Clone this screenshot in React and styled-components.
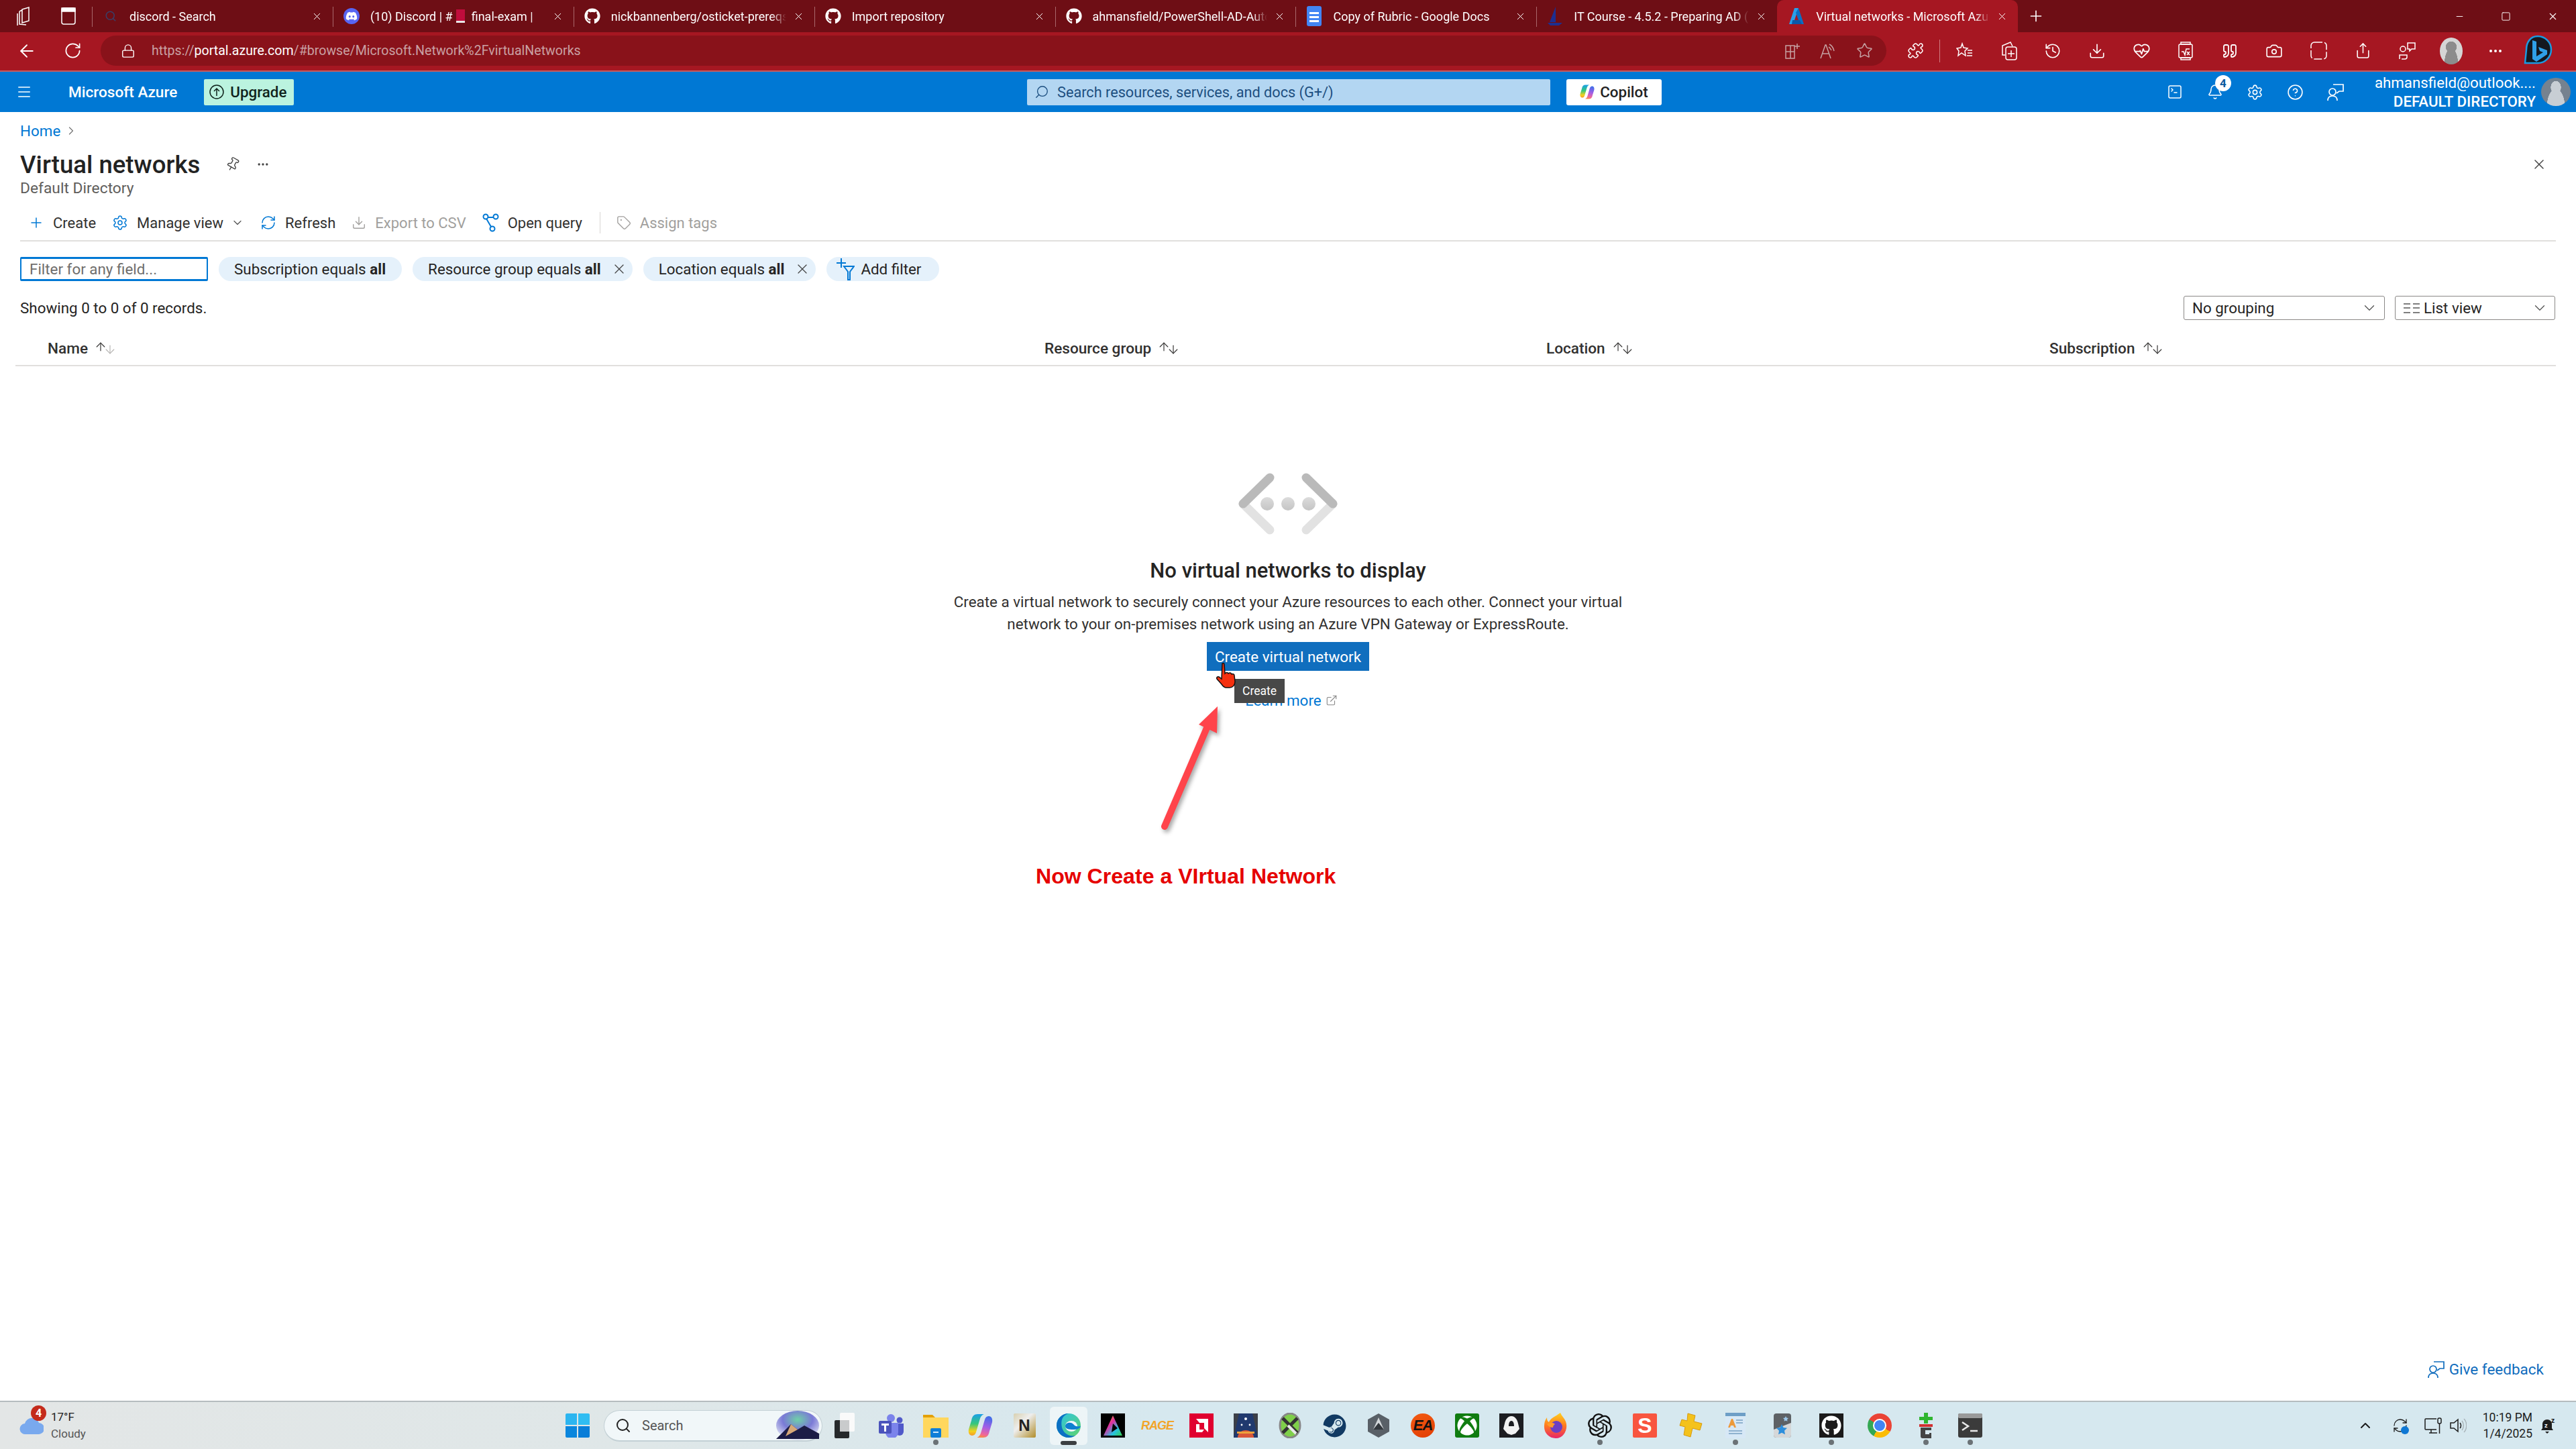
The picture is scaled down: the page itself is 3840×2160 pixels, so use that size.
import React from "react";
import styled, { createGlobalStyle } from "styled-components";
import {
  ArrowDown, ArrowLeft, ArrowUp, Camera, ChevronDown, ChevronRight, ChevronUp, CircleHelp, Download,
  Ellipsis, ExternalLink, HeartPulse, Lock, Menu, Minus, Pin, Plus, Puzzle, Quote,
  RefreshCw, RotateCw, Search, Settings, Share, Square, Star, Tag, TerminalSquare, X, History, Bell,
} from "lucide-react";
import { FaGithub, FaSteam, FaXbox, FaDiscord } from "react-icons/fa";
import { SiOpenai } from "react-icons/si";

const FONT = '"Roboto", "Liberation Sans", sans-serif';

const GlobalStyle = createGlobalStyle`
  html, body { margin: 0; padding: 0; background: #fff; }
  body { font-family: ${FONT}; overflow: hidden; }
  * { box-sizing: border-box; }
`;

const Page = styled.div`
  position: relative;
  width: 3840px;
  height: 2160px;
  display: flex;
  flex-direction: column;
  overflow: hidden;
`;

/* ---------- browser tabs ---------- */
const TabStrip = styled.div`
  flex: 0 0 48px;
  display: flex;
  align-items: stretch;
  background: #6e0e15;
  color: #fff;
`;

const StripTools = styled.div`
  flex: 0 0 137px;
  display: flex;
  align-items: center;
  gap: 40px;
  padding-left: 25px;
`;

const Tab = styled.div`
  flex: 0 0 358.9px;
  width: 358.9px;
  min-width: 0;
  display: flex;
  align-items: center;
  padding: 0 15px 0 16px;
  position: relative;
  background: ${(p) => (p.$active ? "#a61722" : "transparent")};
  border-radius: ${(p) => (p.$active ? "10px 10px 0 0" : "0")};
  &::before {
    content: "";
    display: ${(p) => (p.$active ? "none" : "block")};
    position: absolute;
    left: 0;
    top: 10px;
    bottom: 8px;
    width: 1px;
    background: #a9686c;
  }
`;

const TabIcon = styled.span`
  flex: 0 0 24px;
  display: flex;
  align-items: center;
  justify-content: center;
  margin-right: 16px;
`;

const TabTitle = styled.span`
  flex: 1;
  min-width: 0;
  margin-right: 10px;
  font-size: 18px;
  white-space: nowrap;
  overflow: hidden;
  -webkit-mask-image: linear-gradient(to right, #000 calc(100% - 22px), transparent);
  mask-image: linear-gradient(to right, #000 calc(100% - 22px), transparent);
`;

const EmojiBlock = styled.span`
  display: inline-block;
  width: 13px;
  height: 20px;
  margin: 0 10px 0 5px;
  vertical-align: -3px;
  background: linear-gradient(#c00d3c 85%, #e8e8e8 85%);
`;

const NewTab = styled.span`
  display: flex;
  align-items: center;
  margin-left: 14px;
`;

const WindowControls = styled.div`
  margin-left: auto;
  display: flex;
  align-items: center;
  gap: 54px;
  padding-right: 26px;
`;

/* ---------- address bar ---------- */
const AddressRow = styled.div`
  flex: 0 0 59px;
  display: flex;
  align-items: center;
  padding: 0 0 2px 6px;
  background: #a61722;
  border-bottom: 2px solid #c45c60;
  color: #fff;
`;

const ToolButton = styled.span`
  flex: 0 0 ${(p) => p.$w || 66}px;
  display: flex;
  align-items: center;
  justify-content: center;
`;

const AddressField = styled.div`
  flex: 0 0 2662px;
  height: 45px;
  margin: 0 10px 0 8px;
  padding: 0 20px 0 30px;
  display: flex;
  align-items: center;
  background: #89121a;
  border-radius: 23px;
`;

const Url = styled.span`
  margin-left: 24px;
  font-size: 19.6px;
  color: #c9a0a3;
  b { font-weight: 400; color: #fff; }
`;

const FieldIcons = styled.span`
  margin-left: auto;
  display: flex;
  align-items: center;
  gap: 30px;
  color: #c6a2a4;
`;

const ToolSep = styled.span`
  flex: 0 0 1px;
  height: 34px;
  margin: 0 3px;
  background: #cf7c80;
`;

const ProfileDot = styled.span`
  width: 34px;
  height: 40px;
  border-radius: 50%;
  background: radial-gradient(circle at 50% 35%, #8c8c8c 0 26%, transparent 27%),
    radial-gradient(ellipse at 50% 100%, #8c8c8c 0 42%, transparent 43%), #d5d5d5;
`;

const BingSlot = styled.span`
  display: flex;
  margin-left: 8px;
`;

/* ---------- azure header ---------- */
const AzureBar = styled.header`
  flex: 0 0 60px;
  display: flex;
  align-items: center;
  background: #0078d4;
  color: #fff;
`;

const AzureLeft = styled.div`
  flex: 0 0 1531px;
  display: flex;
  align-items: center;
  padding-left: 24px;
`;

const Brand = styled.span`
  margin-left: 54px;
  font-size: 22.6px;
  font-weight: 500;
`;

const UpgradeButton = styled.span`
  margin-left: 40px;
  width: 134px;
  height: 39px;
  display: flex;
  align-items: center;
  gap: 9px;
  padding-left: 8px;
  background: #bbf3df;
  border-radius: 2px;
  color: #10231c;
  font-size: 22.4px;
  font-weight: 500;
`;

const GlobalSearch = styled.div`
  flex: 0 0 780px;
  height: 39px;
  display: flex;
  align-items: center;
  gap: 12px;
  padding-left: 11px;
  background: #b3d6f2;
  border-radius: 2px;
  color: #1d4f80;
  font-size: 21.7px;
`;

const MirrorIcon = styled.span`
  display: flex;
  transform: scaleX(-1);
`;

const CopilotButton = styled.span`
  flex: 0 0 142px;
  height: 39px;
  margin-left: 24px;
  display: flex;
  align-items: center;
  justify-content: center;
  gap: 8px;
  background: #fff;
  border-radius: 3px;
  color: #222;
  font-size: 22.4px;
  font-weight: 500;
`;

const HeaderIcons = styled.div`
  margin-left: auto;
  display: flex;
  align-items: center;
`;

const HeaderIcon = styled.span`
  position: relative;
  flex: 0 0 60px;
  display: flex;
  justify-content: center;
`;

const NotifyBadge = styled.span`
  position: absolute;
  top: -13px;
  left: 30px;
  width: 24px;
  height: 24px;
  display: flex;
  align-items: center;
  justify-content: center;
  border-radius: 50%;
  background: #fff;
  color: #0b5a9e;
  font-size: 17px;
  font-weight: 700;
`;

const Account = styled.div`
  display: flex;
  align-items: center;
  gap: 8px;
  margin-left: 28px;
  padding-right: 8px;
`;

const AccountText = styled.div`
  text-align: right;
  font-size: 22.3px;
  line-height: 28px;
  strong { display: block; font-weight: 500; }
`;

const AccountAvatar = styled.span`
  width: 44px;
  height: 42px;
  border-radius: 50%;
  background: radial-gradient(ellipse at 50% 34%, #c8ced4 0 24%, transparent 25%),
    radial-gradient(ellipse at 50% 100%, #c8ced4 0 42%, transparent 43%), #76828f;
`;

/* ---------- portal blade ---------- */
const Blade = styled.main`
  flex: 1;
  min-height: 0;
  display: flex;
  flex-direction: column;
  padding: 0 30px;
  background: #fff;
  color: #252423;
`;

const Breadcrumb = styled.nav`
  margin-top: 16px;
  height: 24px;
  display: flex;
  align-items: center;
  gap: 6px;
  font-size: 22.4px;
  color: #0078d4;
  svg { color: #777; }
`;

const TitleRow = styled.div`
  margin-top: 20px;
  height: 36px;
  display: flex;
  align-items: center;
  padding-right: 13px;
`;

const Title = styled.h1`
  margin: 0;
  font-size: 36.6px;
  font-weight: 500;
  color: #222;
`;

const TitleAction = styled.span`
  display: flex;
  margin-left: ${(p) => p.$ml};
  color: #444;
  svg { transform: ${(p) => (p.$tilt ? "rotate(30deg)" : "none")}; }
`;

const Subtitle = styled.div`
  margin-top: 5px;
  height: 26px;
  line-height: 26px;
  font-size: 22.8px;
  color: #5f5e5c;
`;

const CommandBar = styled.div`
  margin-top: 21px;
  height: 45px;
  padding: 0 0 9px 12px;
  display: flex;
  align-items: center;
  gap: 24px;
  border-bottom: 2px solid #e1dfdd;
`;

const Command = styled.span`
  display: flex;
  align-items: center;
  gap: 13px;
  font-size: 22px;
  color: ${(p) => (p.$disabled ? "#a19f9d" : "#323130")};
  svg { flex: none; color: ${(p) => (p.$disabled ? "#a19f9d" : "#0078d4")}; }
  svg.caret { color: #555; margin-left: -2px; }
`;

const CommandSep = styled.span`
  width: 1px;
  height: 32px;
  margin-left: 2px;
  background: #d8d6d4;
`;

const FilterRow = styled.div`
  margin-top: 23px;
  display: flex;
  align-items: center;
  gap: 16px;
`;

const FilterInput = styled.input`
  width: 280px;
  height: 36px;
  padding: 0 12px;
  border: solid #0078d4;
  border-width: 3px 2px;
  border-radius: 2px;
  outline: none;
  font-family: ${FONT};
  font-size: 22.4px;
  &::placeholder { color: #6f6e6c; opacity: 1; }
`;

const Pill = styled.span`
  height: 36px;
  display: flex;
  align-items: center;
  padding: 0 ${(p) => (p.$closable ? 8 : 24)}px 0 23px;
  gap: 15px;
  border-radius: 18px;
  background: #e5f1fb;
  font-size: 22.4px;
  color: #252423;
  b { font-weight: 700; }
  svg { color: #444; }
`;

const AddFilter = styled(Pill)`
  padding: 0 27px 0 15px;
  gap: 9px;
`;

const SummaryRow = styled.div`
  margin-top: 22px;
  display: flex;
  align-items: center;
  justify-content: space-between;
  padding-right: 1px;
  font-size: 22.4px;
`;

const Dropdowns = styled.div`
  display: flex;
  gap: 15px;
`;

const Dropdown = styled.div`
  width: ${(p) => p.$w}px;
  height: 36px;
  display: flex;
  align-items: center;
  gap: 6px;
  padding: 0 9px 0 12px;
  border: 1px solid #8a8886;
  border-radius: 3px;
  font-size: 22.4px;
  svg:last-child { margin-left: auto; color: #555; }
`;

const TableHead = styled.div`
  margin: 21px 0 0 -7px;
  height: 48px;
  padding: 0 0 4px 48px;
  display: grid;
  grid-template-columns: 1486px 748px 750px 1fr;
  align-items: center;
  border-bottom: 2px solid #e1dfdd;
`;

const HeadCell = styled.span`
  display: flex;
  align-items: center;
  gap: 9px;
  font-size: 22.6px;
  font-weight: 500;
  color: #323130;
`;

const SortArrows = styled.span`
  display: inline-flex;
  svg + svg { margin-left: -6px; margin-top: 4px; color: ${(p) => (p.$faded ? "#b5b3b1" : "#323130")}; }
`;

const EmptyState = styled.section`
  margin-top: 158px;
  display: flex;
  flex-direction: column;
  align-items: center;
  text-align: center;
`;

const EmptyTitle = styled.h2`
  margin: 33px 0 0;
  line-height: 40px;
  font-size: 31px;
  font-weight: 500;
  color: #252423;
`;

const EmptyText = styled.p`
  margin: 10px 0 0;
  width: 1040px;
  line-height: 33px;
  font-size: 22.4px;
  color: #323130;
`;

const PrimaryButton = styled.button`
  margin-top: 10px;
  width: 242px;
  height: 43px;
  border: 0;
  background: #106ebe;
  color: #fff;
  font-family: ${FONT};
  font-size: 22.4px;
`;

const LearnMore = styled.a`
  margin: 29px 0 0 10px;
  display: flex;
  align-items: center;
  gap: 6px;
  line-height: 30px;
  font-size: 22.4px;
  color: #0078d4;
  svg { color: #888; }
`;

const Feedback = styled.a`
  margin: auto 18px 32px 0;
  align-self: flex-end;
  display: flex;
  align-items: center;
  gap: 7px;
  line-height: 30px;
  font-size: 22.5px;
  color: #0f6cbd;
`;

/* ---------- things drawn over the page ---------- */
const Tooltip = styled.div`
  position: absolute;
  left: 1840px;
  top: 1012px;
  width: 75px;
  height: 36px;
  display: flex;
  align-items: center;
  justify-content: center;
  background: #484848;
  color: #fff;
  font-size: 17.5px;
`;

const HandCursor = styled.svg`
  position: absolute;
  left: 1812px;
  top: 987px;
  width: 34px;
  height: 40px;
`;

const ArrowMark = styled.svg`
  position: absolute;
  left: 1725px;
  top: 1048px;
  width: 100px;
  height: 195px;
  overflow: visible;
  filter: drop-shadow(3px 4px 3px rgba(0, 0, 0, 0.35));
`;

const Callout = styled.div`
  position: absolute;
  left: 1544px;
  top: 1285px;
  line-height: 42px;
  font-family: "Liberation Sans", Arial, sans-serif;
  font-size: 32.1px;
  font-weight: 700;
  color: #e60000;
`;

/* ---------- taskbar ---------- */
const Taskbar = styled.footer`
  flex: 0 0 72px;
  display: flex;
  align-items: center;
  border-top: 2px solid #b5bcbf;
  background: linear-gradient(90deg, #e3e6e6 0%, #dfe7e8 25%, #d6e8ef 45%, #d6e8ef 100%);
  color: #1c1c1c;
`;

const Weather = styled.div`
  flex: 0 0 843px;
  position: relative;
  display: flex;
  align-items: center;
  gap: 11px;
  padding-left: 29px;
  font-size: 17px;
  line-height: 25px;
  small { display: block; font-size: 17px; color: #555; }
`;

const CloudBadge = styled.span`
  position: absolute;
  left: 46px;
  top: -5px;
  width: 23px;
  height: 23px;
  display: flex;
  align-items: center;
  justify-content: center;
  border-radius: 50%;
  background: #c42b1c;
  color: #fff;
  font-size: 16px;
  font-weight: 700;
`;

const TaskSearch = styled.div`
  flex: 0 0 326px;
  height: 47px;
  margin-left: 21px;
  display: flex;
  align-items: center;
  gap: 16px;
  padding: 0 0 0 16px;
  border-radius: 24px;
  background: #f1f7f9;
  border: 1px solid #c3d0d5;
  border-bottom-width: 2px;
  font-size: 20px;
  color: #555;
  svg:last-child { margin: 0 2px 0 auto; }
`;

const TaskItem = styled.span`
  position: relative;
  flex: 0 0 66px;
  height: 57px;
  margin-left: ${(p) => p.$ml || 0}px;
  display: flex;
  align-items: center;
  justify-content: center;
  &::before {
    content: "";
    display: ${(p) => (p.$active ? "block" : "none")};
    position: absolute;
    inset: 0 5px;
    border-radius: 6px;
    background: rgba(255, 255, 255, 0.55);
  }
  &::after {
    content: "";
    display: ${(p) => (p.$run || p.$active ? "block" : "none")};
    position: absolute;
    bottom: 0;
    left: 50%;
    width: ${(p) => (p.$active ? 24 : 8)}px;
    height: ${(p) => (p.$active ? 6 : 8)}px;
    margin-left: ${(p) => (p.$active ? -12 : -4)}px;
    border-radius: 4px;
    background: ${(p) => (p.$active ? "#3b3f42" : "#6b7276")};
  }
  > * { position: relative; }
`;

const Tile = styled.span`
  width: ${(p) => p.$size || 36}px;
  height: ${(p) => p.$h || 36}px;
  display: flex;
  align-items: center;
  justify-content: center;
  background: ${(p) => p.$bg};
  color: ${(p) => p.$fg || "#fff"};
  border-radius: ${(p) => p.$r || 0}px;
  font-size: ${(p) => p.$fs || 20}px;
  font-weight: 700;
  font-style: ${(p) => (p.$italic ? "italic" : "normal")};
  font-family: "Liberation Sans", sans-serif;
  letter-spacing: ${(p) => p.$ls || 0}px;
`;

const ChromeBall = styled.span`
  width: 36px;
  height: 36px;
  display: flex;
  align-items: center;
  justify-content: center;
  border-radius: 50%;
  background: conic-gradient(#ea4335 0 120deg, #fbbc04 120deg 210deg, #34a853 210deg 300deg, #ea4335 300deg);
  &::after {
    content: "";
    width: 16px;
    height: 16px;
    border-radius: 50%;
    background: #4285f4;
    border: 2px solid #fff;
  }
`;

const Tray = styled.div`
  margin-left: auto;
  display: flex;
  align-items: center;
  padding-right: 30px;
  color: #1c1c1c;
`;

const TrayIcon = styled.span`
  position: relative;
  display: flex;
  margin-left: ${(p) => p.$ml}px;
`;

const SyncDot = styled.span`
  position: absolute;
  right: -1px;
  bottom: -1px;
  width: 12px;
  height: 12px;
  border-radius: 50%;
  background: #0f78d4;
`;

const Clock = styled.div`
  margin-left: 24px;
  text-align: right;
  font-size: 17.5px;
  line-height: 24px;
`;

const GithubMark = () => <FaGithub size={24} />;

const AzureMark = ({ size = 26 }) => (
  <svg width={size} height={size} viewBox="0 0 24 26">
    <path d="M9 1h6L7 25H1z" fill="#2aa0ea" />
    <path d="M15 1l8 24h-6L11 8z" fill="#0a6fc4" />
    <path d="M6 19h11l3 6H5z" fill="#0c58a8" />
  </svg>
);

const CopilotMark = ({ id, size = 24 }) => (
  <svg width={size} height={size} viewBox="0 0 36 36">
    <defs>
      <linearGradient id={`${id}A`} x1="0.3" y1="0" x2="0.3" y2="1">
        <stop offset="0" stopColor="#1a9fe8" />
        <stop offset="0.45" stopColor="#35c77a" />
        <stop offset="0.8" stopColor="#f4d21c" />
        <stop offset="1" stopColor="#f49a2a" />
      </linearGradient>
      <linearGradient id={`${id}B`} x1="0.6" y1="0" x2="0.4" y2="1">
        <stop offset="0" stopColor="#3f6ee8" />
        <stop offset="0.5" stopColor="#a45ee6" />
        <stop offset="0.85" stopColor="#f0679a" />
        <stop offset="1" stopColor="#f78a4a" />
      </linearGradient>
    </defs>
    <path d="M14 1h9c-3 1-5 4-6 8l-5 17c-1 4-3 6-6 6-4 0-6-4-5-9l4-13c1-6 4-9 9-9z" fill={`url(#${id}A)`} />
    <path d="M22 35h-9c3-1 5-4 6-8l5-17c1-4 3-6 6-6 4 0 6 4 5 9l-4 13c-1 6-4 9-9 9z" fill={`url(#${id}B)`} />
  </svg>
);

const BingMark = () => (
  <svg width="44" height="48" viewBox="0 0 44 48">
    <path d="M22 2c11 0 20 9 20 20s-9 20-20 20H3l2-20C5 11 11 2 22 2z" fill="#14181f" stroke="#1b9ae0" strokeWidth="2.5" />
    <path d="M14 8l6 2v22l10-6-5-2-2-6 13 5v6L20 40l-6-4z" fill="#2f9fe6" />
  </svg>
);

const tabs = [
  { id: "search", title: "discord - Search", icon: <Search size={18} color="#3a3f68" /> },
  {
    id: "discord",
    title: (
      <>
        (10) Discord | #<EmojiBlock />final-exam |
      </>
    ),
    icon: (
      <Tile $size={24} $h={24} $bg="#5865f2" $r={12}>
        <FaDiscord size={18} />
      </Tile>
    ),
  },
  { id: "osticket", title: "nickbannenberg/osticket-prereqs", icon: <GithubMark /> },
  { id: "import", title: "Import repository", icon: <GithubMark /> },
  { id: "psad", title: "ahmansfield/PowerShell-AD-Automation", icon: <GithubMark /> },
  {
    id: "docs",
    title: "Copy of Rubric - Google Docs",
    icon: (
      <svg width="22" height="30" viewBox="0 0 22 30">
        <rect width="22" height="30" rx="3" fill="#4285f4" />
        <path d="M4 9h14v3H4zM4 15h14v3H4zM4 21h14v3H4z" fill="#fff" />
      </svg>
    ),
  },
  {
    id: "course",
    title: "IT Course - 4.5.2 - Preparing AD (",
    icon: (
      <svg width="24" height="30" viewBox="0 0 24 30">
        <path d="M13 1v23H4z" fill="#1d2f91" />
        <path d="M1 25h22l-5 4H5z" fill="#1d2f91" />
      </svg>
    ),
  },
  { id: "vnet", title: "Virtual networks - Microsoft Azure", icon: <AzureMark />, active: true },
];

const StartIcon = () => (
  <svg width="36" height="36" viewBox="0 0 36 36">
    <path d="M0 2a2 2 0 012-2h15v17H0z" fill="#2cb5f0" />
    <path d="M19 0h15a2 2 0 012 2v15H19z" fill="#30bdf2" />
    <path d="M0 19h17v17H2a2 2 0 01-2-2z" fill="#0a86dd" />
    <path d="M19 19h17v15a2 2 0 01-2 2H19z" fill="#0a7ed8" />
  </svg>
);

const taskApps = [
  {
    id: "taskview",
    node: (
      <svg width="30" height="38" viewBox="0 0 30 38">
        <rect x="0" y="11" width="22" height="27" rx="2" fill="#26292b" />
        <rect x="8" y="0" width="22" height="28" rx="2" fill="#fafafa" />
        <rect x="8" y="11" width="14" height="17" fill="#c9cbcc" />
      </svg>
    ),
  },
  {
    id: "teams",
    ml: 4,
    node: (
      <svg width="38" height="36" viewBox="0 0 38 36">
        <circle cx="18" cy="7" r="6" fill="#7b83eb" />
        <circle cx="31" cy="10" r="4.5" fill="#5059c9" />
        <path d="M25 15h12v12a6 6 0 01-12 0z" fill="#5059c9" />
        <path d="M10 14h19v14a9 9 0 01-19 0z" fill="#7b83eb" />
        <rect x="0" y="11" width="19" height="19" rx="2" fill="#4b53bc" />
        <path d="M4 15h11v3h-4v9H8v-9H4z" fill="#fff" />
      </svg>
    ),
  },
  {
    id: "files",
    run: true,
    node: (
      <svg width="38" height="36" viewBox="0 0 38 36">
        <path d="M0 2h14l4 4h20v6H0z" fill="#e3a008" />
        <path d="M0 6h38v30H0z" fill="#ffd75e" />
        <rect x="11" y="22" width="16" height="14" rx="2" fill="#0f7ed8" />
        <rect x="15" y="27" width="8" height="2" fill="#cfe8fb" />
      </svg>
    ),
  },
  { id: "copilot", node: <CopilotMark id="cpTask" size={37} /> },
  {
    id: "notepad",
    node: (
      <Tile $bg="linear-gradient(135deg,#d8d0b0,#eee 40%,#b08d2a)" $r={2} $fg="#222" $fs={24} $size={33}>
        N
      </Tile>
    ),
  },
  {
    id: "edge",
    active: true,
    node: (
      <svg width="36" height="38" viewBox="0 0 36 38">
        <defs>
          <linearGradient id="edA" x1="0" y1="0" x2="1" y2="1">
            <stop offset="0" stopColor="#2bc4e8" />
            <stop offset="1" stopColor="#5fd36a" />
          </linearGradient>
        </defs>
        <circle cx="18" cy="19" r="18" fill="url(#edA)" />
        <path d="M0 19C0 8 9 1 18 1 8 4 6 12 8 22c2 8 10 14 20 12-3 2-6 3-10 3C8 37 0 29 0 19z" fill="#0c70c4" />
        <ellipse cx="22" cy="20" rx="9" ry="8" fill="#f1f7fa" />
        <path d="M13 20c0-5 8-7 12-3 2 2 3 4 11 3-1 4-6 5-11 5-7 0-12-1-12-5z" fill="#0f80d0" />
      </svg>
    ),
  },
  {
    id: "prism",
    node: (
      <Tile $bg="#000">
        <svg width="30" height="34" viewBox="0 0 30 34">
          <defs>
            <linearGradient id="prA" x1="0" y1="0" x2="1" y2="1">
              <stop offset="0" stopColor="#f6d20c" />
              <stop offset="0.4" stopColor="#e02ea0" />
              <stop offset="0.7" stopColor="#26c2e0" />
              <stop offset="1" stopColor="#36d04a" />
            </linearGradient>
          </defs>
          <path d="M15 2L29 32H1z" fill="url(#prA)" />
          <path d="M15 14l7 7-9 6z" fill="#000" />
        </svg>
      </Tile>
    ),
  },
  {
    id: "rage",
    node: (
      <Tile $bg="transparent" $fg="#f2a52a" $size={40} $fs={18} $italic $ls={-1}>
        RAGE
      </Tile>
    ),
  },
  {
    id: "amd",
    node: (
      <Tile $bg="#e0002f">
        <svg width="24" height="24" viewBox="0 0 24 24">
          <path d="M4 2h18v20l-6-6V8H9zM4 10l5 0v8h7l-3 4H4z" fill="#fff" />
        </svg>
      </Tile>
    ),
  },
  {
    id: "starfield",
    node: (
      <svg width="36" height="36" viewBox="0 0 36 36">
        <rect width="36" height="36" fill="#20396e" />
        <path d="M0 0h8L0 36zM36 0h-8l8 36z" fill="#3b3f48" />
        <circle cx="18" cy="8" r="2" fill="#fff" />
        <circle cx="12" cy="17" r="1.4" fill="#fff" />
        <circle cx="24" cy="17" r="1.4" fill="#fff" />
        <path d="M6 36a12 11 0 0124 0z" fill="#d9563a" />
        <path d="M5 27h26v3H5z" fill="#eda23c" />
      </svg>
    ),
  },
  {
    id: "xmark",
    node: (
      <svg width="34" height="38" viewBox="0 0 34 38">
        <ellipse cx="17" cy="19" rx="15" ry="18" fill="#7fcf4a" stroke="#888" strokeWidth="3" />
        <path d="M6 8l22 22M6 30L28 8" stroke="#333" strokeWidth="5" />
        <path d="M14 19l12 12" stroke="#e8e8e8" strokeWidth="4" />
      </svg>
    ),
  },
  { id: "steam", node: <FaSteam size={35} color="#123a63" /> },
  {
    id: "hex",
    node: (
      <svg width="32" height="36" viewBox="0 0 32 36">
        <path d="M16 0l16 9v18l-16 9L0 27V9z" fill="#596067" />
        <path d="M16 6l8 18H8z" fill="#d2d6d9" />
        <path d="M16 14l8 10H8z" fill="#33383d" />
      </svg>
    ),
  },
  {
    id: "ea",
    node: (
      <Tile $bg="linear-gradient(160deg,#f25b12,#e23d04)" $r={18} $fg="#111" $fs={22} $italic $ls={-1}>
        EA
      </Tile>
    ),
  },
  {
    id: "xbox",
    node: (
      <Tile $bg="#107c10" $r={3}>
        <FaXbox size={30} />
      </Tile>
    ),
  },
  {
    id: "riot",
    node: (
      <Tile $bg="#1c1d21">
        <svg width="24" height="30" viewBox="0 0 24 30">
          <path d="M12 1c6 0 9 6 10 11l2 8-6 7-6 2-6-2-6-7 2-8C3 7 6 1 12 1zm0 7c-3 0-4 4-4 8h8c0-4-1-8-4-8z" fill="#f2f2f2" />
        </svg>
      </Tile>
    ),
  },
  {
    id: "firefox",
    node: (
      <svg width="36" height="38" viewBox="0 0 36 38">
        <defs>
          <linearGradient id="ffA" x1="0.5" y1="0" x2="0.5" y2="1">
            <stop offset="0" stopColor="#ffd21f" />
            <stop offset="0.5" stopColor="#ff7a1f" />
            <stop offset="1" stopColor="#e8246a" />
          </linearGradient>
        </defs>
        <path d="M25 0c2 5 6 8 8 13 4 10-2 25-15 25C8 38 0 30 1 19c0-4 1-8 4-12 0 4 1 6 3 7 2-6 9-8 17-14z" fill="url(#ffA)" />
        <circle cx="19" cy="21" r="9" fill="#6b3fc4" />
        <path d="M5 17c4-3 9-3 12 0-2 1-3 3-3 5-4 0-7-2-9-5z" fill="#ff9a2a" />
      </svg>
    ),
  },
  { id: "chatgpt", run: true, node: <SiOpenai size={36} color="#111" /> },
  {
    id: "snagit",
    ml: 1,
    node: (
      <Tile $bg="#f8553f" $r={2} $fs={32}>
        S
      </Tile>
    ),
  },
  {
    id: "psplus",
    ml: 3,
    node: (
      <svg width="36" height="38" viewBox="0 0 36 38">
        <path d="M13 1l11 3-2 9 12 3-3 10-11-3-3 13-10-3 2-12L1 19l3-9 8 2z" fill="#f4c21c" stroke="#d69a10" strokeWidth="1" />
      </svg>
    ),
  },
  {
    id: "wordpad",
    run: true,
    node: (
      <svg width="30" height="38" viewBox="0 0 30 38">
        <rect x="0" y="2" width="30" height="36" rx="2" fill="#d7e8f6" />
        <rect x="0" y="0" width="30" height="5" fill="#6d9ec6" />
        <path d="M4 22l5-13h2l5 13h-3l-1-3H8l-1 3z" fill="#ec9a3c" />
        <path d="M16 11h10M16 15h10M5 27h20M5 31h20" stroke="#8fb2cf" strokeWidth="2" />
      </svg>
    ),
  },
  {
    id: "anki",
    ml: 4,
    node: (
      <svg width="26" height="36" viewBox="0 0 26 36">
        <rect width="26" height="36" rx="4" fill="#5d6165" />
        <path d="M0 24L26 14v18a4 4 0 01-4 4H4a4 4 0 01-4-4z" fill="#d5d7d8" />
        <path d="M12 16l2.5 5 5.5.8-4 4 1 5.5-5-2.6-5 2.6 1-5.5-4-4 5.5-.8z" fill="#2e8fdc" />
        <path d="M18 4l1.2 2.5 2.8.4-2 2 .5 2.8-2.5-1.3-2.5 1.3.5-2.8-2-2 2.8-.4z" fill="#9cc7ea" />
      </svg>
    ),
  },
  {
    id: "github",
    ml: 7,
    run: true,
    node: (
      <Tile $bg="#1b1a1a">
        <FaGithub size={30} />
      </Tile>
    ),
  },
  { id: "chrome", ml: 6, node: <ChromeBall /> },
  {
    id: "gitplus",
    ml: 3,
    run: true,
    node: (
      <svg width="22" height="38" viewBox="0 0 22 38">
        <path d="M8 0h6v6h7v5h-7v5H8v-5H1V6h7z" fill="#2fb52f" />
        <rect x="1" y="17" width="20" height="4" fill="#d12f2f" />
        <path d="M3 22h16v4h-9v6h6v-2h3v8H6c-2 0-3-1-3-3z" fill="#444" />
      </svg>
    ),
  },
  {
    id: "terminal",
    run: true,
    node: (
      <svg width="36" height="36" viewBox="0 0 36 36">
        <rect width="36" height="36" rx="3" fill="#3b3b3b" />
        <rect width="36" height="7" rx="2" fill="#9a9a9a" />
        <path d="M6 13l9 6-9 6" fill="none" stroke="#e8e8e8" strokeWidth="2.5" />
        <path d="M18 26h11" stroke="#e8e8e8" strokeWidth="2.5" />
      </svg>
    ),
  },
];

const VnetEmptyIcon = () => (
  <svg width="150" height="94" viewBox="0 0 150 94">
    <defs>
      <linearGradient id="dotFill" x1="0" y1="0" x2="0" y2="1">
        <stop offset="0" stopColor="#dcdcdc" />
        <stop offset="1" stopColor="#c4c4c4" />
      </linearGradient>
    </defs>
    <g fill="none" strokeLinecap="round" strokeWidth="13">
      <path d="M8 47l40 39M142 47l-40 39" stroke="#e2e2e2" />
      <path d="M8 47L48 8M142 47L102 8" stroke="#bababa" />
    </g>
    <circle cx="44" cy="47" r="10" fill="url(#dotFill)" />
    <circle cx="75" cy="47" r="10" fill="url(#dotFill)" />
    <circle cx="106" cy="47" r="10" fill="url(#dotFill)" />
  </svg>
);

const AddFilterIcon = () => (
  <svg width="27" height="34" viewBox="0 0 27 34" fill="none" stroke="#0078d4" strokeWidth="2">
    <path d="M7 1v14M0 8h14" />
    <path d="M11 13h15l-6 8v12h-3V21z" />
  </svg>
);

const QueryIcon = () => (
  <svg width="25" height="28" viewBox="0 0 25 28" fill="none" stroke="#0078d4" strokeWidth="2">
    <circle cx="5" cy="5" r="3.5" />
    <circle cx="20" cy="5" r="3.5" />
    <circle cx="15" cy="23" r="3.5" />
    <path d="M8 6h8M6 8l7 12" />
  </svg>
);

const FeedbackIcon = () => (
  <svg width="25" height="25" viewBox="0 0 25 25" fill="none" stroke="currentColor" strokeWidth="1.7">
    <circle cx="8" cy="12" r="5" />
    <path d="M1 25c0-5 3-7 7-7s7 2 7 7M9 1h15v10h-6l-4 3" />
  </svg>
);

const ListIcon = () => (
  <svg width="24" height="15" viewBox="0 0 24 15" fill="none" stroke="#555" strokeWidth="1.5">
    <path d="M0 1h10M0 7h10M0 14h10M14 1h10M14 7h10M14 14h10" />
  </svg>
);

export default function App() {
  return (
    <Page>
      <GlobalStyle />

      <TabStrip>
        <StripTools>
          <svg width="26" height="30" viewBox="0 0 26 30" fill="none" stroke="#fff" strokeWidth="1.5">
            <path d="M8 5l10-3v20l-10 3zM4 8l4-2M4 8v19l10 1M1 11v18" />
          </svg>
          <svg width="22" height="26" viewBox="0 0 22 26" fill="none" stroke="#fff" strokeWidth="1.5">
            <rect x="1" y="1" width="20" height="24" rx="3" />
            <path d="M1 6h20V1H1z" fill="#fff" />
          </svg>
        </StripTools>
        {tabs.map((tab) => (
          <Tab key={tab.id} $active={tab.active}>
            <TabIcon>{tab.icon}</TabIcon>
            <TabTitle>{tab.title}</TabTitle>
            <X size={17} strokeWidth={1.4} />
          </Tab>
        ))}
        <NewTab>
          <Plus size={26} strokeWidth={1.5} />
        </NewTab>
        <WindowControls>
          <Minus size={15} strokeWidth={1.5} />
          <Square size={15} strokeWidth={1.5} />
          <X size={17} strokeWidth={1.5} />
        </WindowControls>
      </TabStrip>

      <AddressRow>
        <ToolButton $w={68}>
          <ArrowLeft size={30} strokeWidth={1.5} />
        </ToolButton>
        <ToolButton $w={68}>
          <RotateCw size={27} strokeWidth={1.5} />
        </ToolButton>
        <AddressField>
          <Lock size={22} strokeWidth={1.5} />
          <Url>
            https://<b>portal.azure.com</b>/#browse/Microsoft.Network%2FvirtualNetworks
          </Url>
          <FieldIcons>
            <svg width="22" height="24" viewBox="0 0 22 24" fill="none" stroke="currentColor" strokeWidth="1.5">
              <path d="M1 4h13v19H1zM1 13h13M8 4v19M18 1v8M14 5h8" />
            </svg>
            <svg width="24" height="24" viewBox="0 0 24 24" fill="none" stroke="currentColor" strokeWidth="1.5">
              <path d="M1 23L8 3h1l7 20M4 16h10M14 2c4 2 6 5 7 10M13 6c2 1 3 3 4 5" />
            </svg>
            <Star size={25} strokeWidth={1.5} />
          </FieldIcons>
        </AddressField>
        <ToolButton>
          <Puzzle size={25} strokeWidth={1.5} />
        </ToolButton>
        <ToolSep />
        <ToolButton>
          <svg width="25" height="26" viewBox="0 0 25 26" fill="none" stroke="#fff" strokeWidth="1.5">
            <path d="M9 2l2 6 6 1-4 4 1 7-6-4-5 4 1-7-3-4 6-1zM17 12h7M17 16h7M16 20h8" />
          </svg>
        </ToolButton>
        <ToolButton>
          <svg width="25" height="28" viewBox="0 0 25 28" fill="none" stroke="#fff" strokeWidth="1.5">
            <path d="M7 20H3V6l12-5 3 6" />
            <rect x="8" y="8" width="16" height="19" rx="3" />
            <path d="M16 13v10M11 18h10" />
          </svg>
        </ToolButton>
        <ToolButton>
          <History size={26} strokeWidth={1.5} />
        </ToolButton>
        <ToolButton>
          <Download size={26} strokeWidth={1.5} />
        </ToolButton>
        <ToolButton>
          <HeartPulse size={27} strokeWidth={1.5} />
        </ToolButton>
        <ToolButton>
          <svg width="22" height="28" viewBox="0 0 22 28" fill="none" stroke="#fff" strokeWidth="1.5">
            <rect x="1" y="4" width="20" height="20" rx="2" />
            <path d="M4 1h14v3H4zM4 24h14v3H4zM5 15h3l2 5 2-9h5M13 15l4 5M17 15l-4 5" />
          </svg>
        </ToolButton>
        <ToolButton>
          <Quote size={24} strokeWidth={1.8} />
        </ToolButton>
        <ToolButton>
          <Camera size={26} strokeWidth={1.5} />
        </ToolButton>
        <ToolButton>
          <svg width="25" height="27" viewBox="0 0 25 27" fill="none" stroke="#fff" strokeWidth="1.5" strokeDasharray="12 3">
            <rect x="1" y="1" width="23" height="25" rx="5" />
          </svg>
        </ToolButton>
        <ToolButton>
          <Share size={25} strokeWidth={1.5} />
        </ToolButton>
        <ToolButton>
          <svg width="25" height="27" viewBox="0 0 25 27" fill="none" stroke="#fff" strokeWidth="1.5">
            <circle cx="6" cy="11" r="4" />
            <path d="M1 26V20h11v3a3 3 0 01-3 3H4M13 2h11v9h-5l-3 3v-3h-3z" />
          </svg>
        </ToolButton>
        <ToolButton>
          <ProfileDot />
        </ToolButton>
        <ToolButton>
          <Ellipsis size={24} />
        </ToolButton>
        <BingSlot>
          <BingMark />
        </BingSlot>
      </AddressRow>

      <AzureBar>
        <AzureLeft>
          <Menu size={24} strokeWidth={2} color="#bfe0f7" />
          <Brand>Microsoft Azure</Brand>
          <UpgradeButton>
            <svg width="22" height="22" viewBox="0 0 22 22" fill="none" stroke="#10231c" strokeWidth="1.5">
              <circle cx="11" cy="11" r="10" />
              <path d="M11 17V6M7 10l4-4 4 4" />
            </svg>
            Upgrade
          </UpgradeButton>
        </AzureLeft>
        <GlobalSearch>
          <MirrorIcon>
            <Search size={22} strokeWidth={1.5} />
          </MirrorIcon>
          Search resources, services, and docs (G+/)
        </GlobalSearch>
        <CopilotButton>
          <CopilotMark id="cpHead" size={22} />
          Copilot
        </CopilotButton>
        <HeaderIcons>
          <HeaderIcon>
            <TerminalSquare size={24} strokeWidth={1.5} />
          </HeaderIcon>
          <HeaderIcon>
            <Bell size={24} strokeWidth={1.5} />
            <NotifyBadge>4</NotifyBadge>
          </HeaderIcon>
          <HeaderIcon>
            <Settings size={25} strokeWidth={1.5} />
          </HeaderIcon>
          <HeaderIcon>
            <CircleHelp size={25} strokeWidth={1.5} />
          </HeaderIcon>
          <HeaderIcon>
            <FeedbackIcon />
          </HeaderIcon>
          <Account>
            <AccountText>
              ahmansfield@outlook....
              <strong>DEFAULT DIRECTORY</strong>
            </AccountText>
            <AccountAvatar />
          </Account>
        </HeaderIcons>
      </AzureBar>

      <Blade>
        <Breadcrumb>
          Home
          <ChevronRight size={20} strokeWidth={1.5} />
        </Breadcrumb>
        <TitleRow>
          <Title>Virtual networks</Title>
          <TitleAction $ml="38px" $tilt>
            <Pin size={22} strokeWidth={1.5} />
          </TitleAction>
          <TitleAction $ml="24px">
            <Ellipsis size={20} />
          </TitleAction>
          <TitleAction $ml="auto">
            <X size={24} strokeWidth={1.5} />
          </TitleAction>
        </TitleRow>
        <Subtitle>Default Directory</Subtitle>

        <CommandBar>
          <Command>
            <Plus size={24} strokeWidth={1.5} />
            Create
          </Command>
          <Command>
            <Settings size={24} strokeWidth={1.5} />
            Manage view
            <ChevronDown className="caret" size={20} strokeWidth={1.5} />
          </Command>
          <Command>
            <RefreshCw size={24} strokeWidth={1.5} />
            Refresh
          </Command>
          <Command $disabled>
            <Download size={22} strokeWidth={1.5} />
            Export to CSV
          </Command>
          <Command>
            <QueryIcon />
            Open query
          </Command>
          <CommandSep />
          <Command $disabled>
            <Tag size={22} strokeWidth={1.5} />
            Assign tags
          </Command>
        </CommandBar>

        <FilterRow>
          <FilterInput placeholder="Filter for any field..." />
          <Pill>
            <span>
              Subscription equals <b>all</b>
            </span>
          </Pill>
          <Pill $closable>
            <span>
              Resource group equals <b>all</b>
            </span>
            <X size={24} strokeWidth={1.2} />
          </Pill>
          <Pill $closable>
            <span>
              Location equals <b>all</b>
            </span>
            <X size={24} strokeWidth={1.2} />
          </Pill>
          <AddFilter>
            <AddFilterIcon />
            Add filter
          </AddFilter>
        </FilterRow>

        <SummaryRow>
          <span>Showing 0 to 0 of 0 records.</span>
          <Dropdowns>
            <Dropdown $w={300}>
              No grouping
              <ChevronDown size={26} strokeWidth={1.2} />
            </Dropdown>
            <Dropdown $w={239}>
              <ListIcon />
              List view
              <ChevronDown size={26} strokeWidth={1.2} />
            </Dropdown>
          </Dropdowns>
        </SummaryRow>

        <TableHead>
          <HeadCell>
            Name
            <SortArrows $faded>
              <ArrowUp size={20} strokeWidth={1.4} />
              <ArrowDown size={20} strokeWidth={1.4} />
            </SortArrows>
          </HeadCell>
          {["Resource group", "Location", "Subscription"].map((col) => (
            <HeadCell key={col}>
              {col}
              <SortArrows>
                <ArrowUp size={20} strokeWidth={1.4} />
                <ArrowDown size={20} strokeWidth={1.4} />
              </SortArrows>
            </HeadCell>
          ))}
        </TableHead>

        <EmptyState>
          <VnetEmptyIcon />
          <EmptyTitle>No virtual networks to display</EmptyTitle>
          <EmptyText>
            Create a virtual network to securely connect your Azure resources to each other. Connect your virtual
            network to your on-premises network using an Azure VPN Gateway or ExpressRoute.
          </EmptyText>
          <PrimaryButton>Create virtual network</PrimaryButton>
          <LearnMore>
            Learn more
            <ExternalLink size={18} strokeWidth={1.5} />
          </LearnMore>
        </EmptyState>

        <Feedback>
          <FeedbackIcon />
          Give feedback
        </Feedback>
      </Blade>

      <Tooltip>Create</Tooltip>
      <HandCursor viewBox="0 0 34 40">
        <path
          d="M10 2c2-1 3 0 3 2l1 13c2-2 4-2 5 0 2-2 4-1 5 1 2-1 4 0 4 2l1 9c0 5-3 9-8 9h-5c-3 0-5-2-7-5l-7-8c-1-2 1-4 3-3l4 3z"
          fill="#f5300f"
          stroke="#111"
          strokeWidth="1.5"
        />
      </HandCursor>
      <ArrowMark viewBox="0 0 100 195">
        <path d="M11 184L77 30" stroke="#ff444b" strokeWidth="10" strokeLinecap="round" />
        <path d="M90 5l-1 40-27-13z" fill="#ff444b" />
      </ArrowMark>
      <Callout>Now Create a VIrtual Network</Callout>

      <Taskbar>
        <Weather>
          <svg width="36" height="26" viewBox="0 0 36 26">
            <path d="M9 26a8 8 0 01-1-16 11 11 0 0121-1 8 8 0 01-1 17z" fill="#79a9ee" />
          </svg>
          <CloudBadge>4</CloudBadge>
          <div>
            17°F
            <small>Cloudy</small>
          </div>
        </Weather>
        <StartIcon />
        <TaskSearch>
          <Search size={24} strokeWidth={2} color="#222" />
          Search
          <svg width="68" height="44" viewBox="0 0 68 44">
            <defs>
              <radialGradient id="skyG" cx="0.5" cy="0.3" r="0.7">
                <stop offset="0" stopColor="#6fd0a8" />
                <stop offset="0.5" stopColor="#7a7ad6" />
                <stop offset="1" stopColor="#e6eaf5" />
              </radialGradient>
            </defs>
            <ellipse cx="34" cy="22" rx="32" ry="22" fill="url(#skyG)" />
            <path d="M2 42L24 20l10 8 10-6 22 12v8z" fill="#1c1c46" />
            <path d="M24 20l10 8-18 10z" fill="#d6a878" />
          </svg>
        </TaskSearch>
        {taskApps.map((app) => (
          <TaskItem key={app.id} $active={app.active} $run={app.run} $ml={app.ml}>
            {app.node}
          </TaskItem>
        ))}
        <Tray>
          <ChevronUp size={24} strokeWidth={2} />
          <TrayIcon $ml={28}>
            <RefreshCw size={24} strokeWidth={1.3} />
            <SyncDot />
          </TrayIcon>
          <TrayIcon $ml={24}>
            <svg width="26" height="25" viewBox="0 0 26 25" fill="none" stroke="#1c1c1c" strokeWidth="1.5">
              <path d="M18 2H2a1 1 0 00-1 1v14a1 1 0 001 1h16M7 23h12M10 18v5" />
              <rect x="20" y="1" width="5" height="8" rx="2" />
              <path d="M22.5 9v15" />
            </svg>
          </TrayIcon>
          <TrayIcon $ml={12}>
            <svg width="25" height="22" viewBox="0 0 25 22" fill="none" stroke="#1c1c1c" strokeWidth="1.5">
              <path d="M1 7h5l6-5v18l-6-5H1zM15 7c2 2 2 6 0 8" />
              <path d="M18 4c3 4 3 10 0 14M21 1c5 5 5 15 0 20" stroke="#a9b4b9" />
            </svg>
          </TrayIcon>
          <Clock>
            10:19 PM
            <br />
            1/4/2025
          </Clock>
          <TrayIcon $ml={13}>
            <svg width="22" height="24" viewBox="0 0 22 24">
              <path d="M9 3c4 0 7 3 7 7v6l2 3H0l2-3v-6c0-4 3-7 7-7zM6 21h6l-3 3z" fill="#1c1c1c" />
              <text x="5" y="15" fontSize="9" fontWeight="700" fill="#fff" fontFamily="Roboto">z</text>
              <text x="15" y="8" fontSize="10" fontWeight="700" fill="#1c1c1c" fontFamily="Roboto">z</text>
            </svg>
          </TrayIcon>
        </Tray>
      </Taskbar>
    </Page>
  );
}
